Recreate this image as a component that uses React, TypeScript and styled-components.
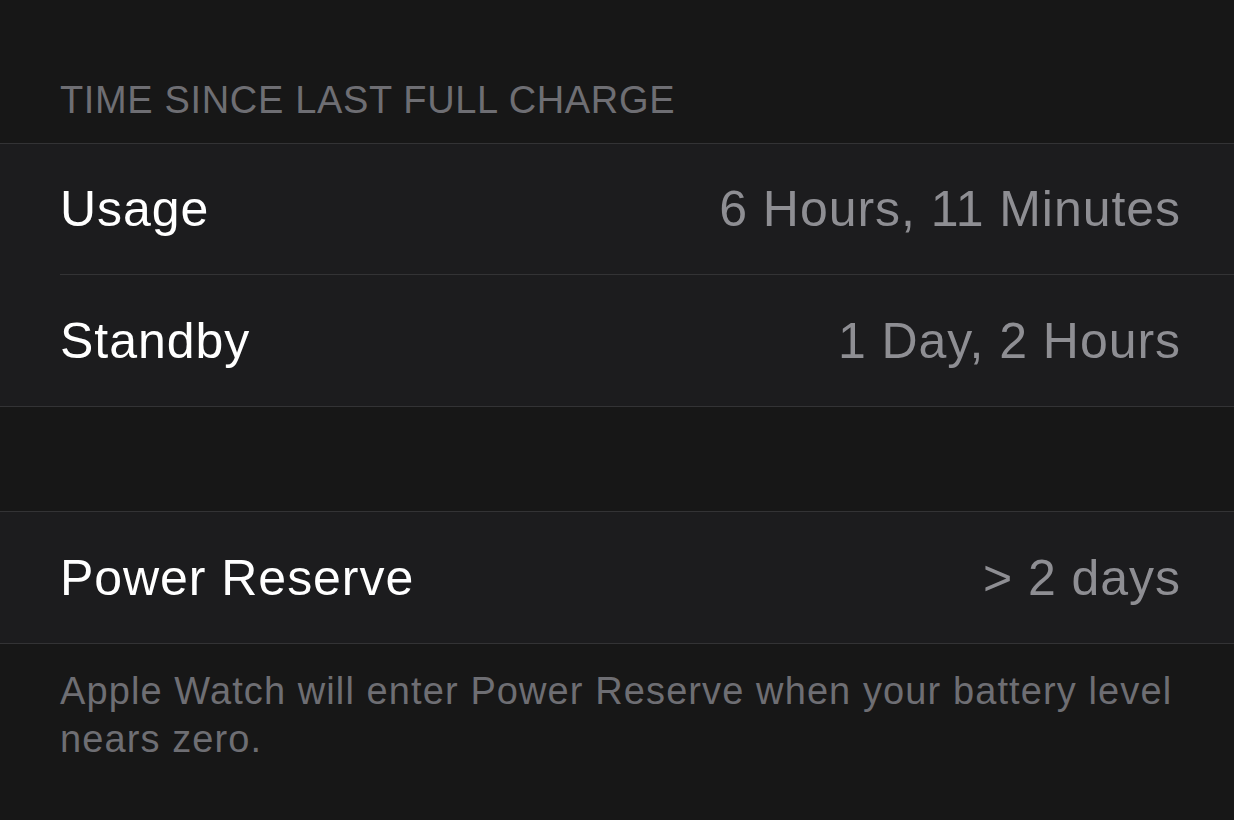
import React from "react";
import styled, { createGlobalStyle } from "styled-components";

const GlobalStyle = createGlobalStyle`
  html, body {
    margin: 0;
    padding: 0;
    background: #171717;
  }
  body {
    font-family: "Liberation Sans", Arial, sans-serif;
    -webkit-font-smoothing: antialiased;
  }
`;

const Page = styled.div`
  width: 1234px;
  height: 820px;
  background: #171717;
  display: flex;
  flex-direction: column;
  overflow: hidden;
`;

const SectionHeader = styled.div`
  padding: 78px 60px 21px;
  font-size: 38px;
  line-height: 44px;
  color: #6e6e73;
  letter-spacing: 0.65px;
  text-transform: uppercase;
`;

const Group = styled.div`
  background: #1c1c1e;
  border-top: 1px solid #333335;
  border-bottom: 1px solid #333335;
  display: flex;
  flex-direction: column;
  padding-left: 60px;
`;

const Row = styled.div<{ $divider?: boolean }>`
  height: ${(p) => (p.$divider ? 130 : 131)}px;
  display: flex;
  align-items: center;
  justify-content: space-between;
  padding-right: 53px;
  font-size: 50px;
  letter-spacing: 0.95px;
  border-bottom: ${(p) => (p.$divider ? "1px solid #333335" : "none")};
`;

const Label = styled.span`
  color: #ffffff;
`;

const Value = styled.span`
  color: #8e8e93;
`;

const Spacer = styled.div`
  height: 104px;
`;

const Footer = styled.p`
  margin: 0;
  padding: 23px 40px 0 60px;
  font-size: 38px;
  line-height: 48px;
  color: #6e6e73;
  letter-spacing: 1.1px;
`;

export default function App() {
  return (
    <>
      <GlobalStyle />
      <Page>
        <SectionHeader>Time Since Last Full Charge</SectionHeader>
        <Group>
          <Row $divider>
            <Label>Usage</Label>
            <Value>6 Hours, 11 Minutes</Value>
          </Row>
          <Row>
            <Label>Standby</Label>
            <Value>1 Day, 2 Hours</Value>
          </Row>
        </Group>
        <Spacer />
        <Group>
          <Row>
            <Label>Power Reserve</Label>
            <Value>&gt; 2 days</Value>
          </Row>
        </Group>
        <Footer>
          Apple Watch will enter Power Reserve when your battery level nears
          zero.
        </Footer>
      </Page>
    </>
  );
}
